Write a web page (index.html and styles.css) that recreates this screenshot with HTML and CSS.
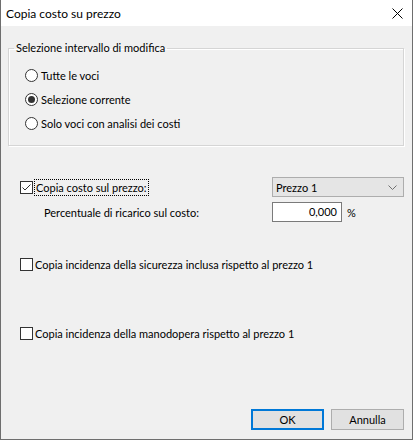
FILE: index.html
```html
<!DOCTYPE html>
<html lang="it">

<head>
    <meta charset="UTF-8">
    <meta name="viewport" content="width=device-width, initial-scale=1.0">
    <title>Copia costo su prezzo</title>
    <link rel="stylesheet" href="styles.css">
</head>

<body>
    <div class="window">
        <div class="titlebar">
            <span class="title">Copia costo su prezzo</span>
            <svg class="close" width="11" height="11" viewBox="0 0 11 11">
                <path d="M0.5 0.5 L10.5 10.5 M10.5 0.5 L0.5 10.5" stroke="#000" stroke-width="1" fill="none" />
            </svg>
        </div>

        <div class="content">
            <fieldset class="group">
                <legend>Selezione intervallo di modifica</legend>
                <div class="radio-row"><span class="radio"></span>Tutte le voci</div>
                <div class="radio-row"><span class="radio checked"></span>Selezione corrente</div>
                <div class="radio-row"><span class="radio"></span>Solo voci con analisi dei costi</div>
            </fieldset>

            <div class="options">
                <div class="check-row">
                    <span class="check">
                        <svg width="11" height="11" viewBox="0 0 11 11">
                            <path d="M1.5 5.5 L4 8 L9.5 2.5" stroke="#333" stroke-width="1" fill="none" />
                        </svg>
                    </span>
                    <span class="focus-label">Copia costo sul prezzo:</span>
                </div>
                <div class="combo">
                    <span>Prezzo 1</span>
                    <svg width="9" height="5" viewBox="0 0 9 5">
                        <path d="M0.5 0.5 L4.5 4.5 L8.5 0.5" stroke="#707070" stroke-width="1" fill="none" />
                    </svg>
                </div>
                <div class="markup-label">Percentuale di ricarico sul costo:</div>
                <div class="markup-field">
                    <div class="textbox">0,000</div>
                    <span>%</span>
                </div>
            </div>

            <div class="check-row safety">
                <span class="check"></span>
                <span>Copia incidenza della sicurezza inclusa rispetto al prezzo 1</span>
            </div>

            <div class="check-row labour">
                <span class="check"></span>
                <span>Copia incidenza della manodopera rispetto al prezzo 1</span>
            </div>

            <div class="buttons">
                <div class="btn default">OK</div>
                <div class="btn">Annulla</div>
            </div>
        </div>
    </div>
</body>

</html>
```

FILE: styles.css
```css
* {
    padding: 0;
    margin: 0;
    box-sizing: border-box;
}

body {
    width: 413px;
    height: 440px;
    font-family: 'Lato', 'Noto Sans', sans-serif;
    font-size: 11px;
    color: #000;
    background: #f0f0f0;
}

.window {
    display: flex;
    flex-direction: column;
    height: 440px;
    border: 1px solid #6e6e6e;
    border-top: none;
}

.titlebar {
    display: flex;
    justify-content: space-between;
    align-items: center;
    height: 26px;
    padding: 0 9px 0 5px;
    background: white;
}

.title {
    font-size: 12px;
}

.content {
    display: flex;
    flex-direction: column;
    flex: 1;
    padding: 14px 8px 9px 7px;
}

.group {
    border: 1px solid #d5d5d5;
    box-shadow: inset 1px 1px 0 #fff, 1px 1px 0 #fff;
    padding: 7px 16px 10px;
}

.group legend {
    margin-left: -11px;
    padding: 0 2px;
    line-height: 16px;
}

.radio-row {
    display: flex;
    align-items: center;
    height: 24px;
}

.radio {
    display: flex;
    align-items: center;
    justify-content: center;
    width: 13px;
    height: 13px;
    margin-right: 3px;
    border: 1px solid #333;
    border-radius: 50%;
    background: white;
}

.radio.checked::after {
    content: "";
    width: 7px;
    height: 7px;
    border-radius: 50%;
    background: #333;
}

.options {
    display: grid;
    grid-template-columns: 1fr 132px;
    row-gap: 5px;
    margin-top: 31px;
}

.check-row {
    display: flex;
    align-items: center;
    height: 20px;
    padding-left: 12px;
}

.check {
    display: flex;
    align-items: center;
    justify-content: center;
    width: 13px;
    height: 13px;
    margin-right: 2px;
    border: 1px solid #333;
    background: white;
}

.focus-label {
    padding: 0 1px;
    outline: 1px dotted #000;
    line-height: 15px;
}

.combo {
    display: flex;
    justify-content: space-between;
    align-items: center;
    height: 20px;
    padding: 0 6px 0 3px;
    border: 1px solid #adadad;
    background: #e5e5e5;
}

.markup-label {
    display: flex;
    align-items: center;
    padding-left: 36px;
}

.markup-field {
    display: flex;
    align-items: center;
    gap: 5px;
}

.textbox {
    width: 70px;
    height: 20px;
    line-height: 18px;
    padding-right: 4px;
    text-align: right;
    border: 1px solid #7a7a7a;
    background: white;
}

.safety {
    margin-top: 32px;
}

.labour {
    margin-top: 49px;
}

.buttons {
    display: flex;
    justify-content: flex-end;
    gap: 7px;
    margin-top: auto;
}

.btn {
    display: flex;
    align-items: center;
    justify-content: center;
    width: 73px;
    height: 21px;
    border: 1px solid #adadad;
    background: #e1e1e1;
}

.btn.default {
    border: 2px solid #0078d7;
}
```
